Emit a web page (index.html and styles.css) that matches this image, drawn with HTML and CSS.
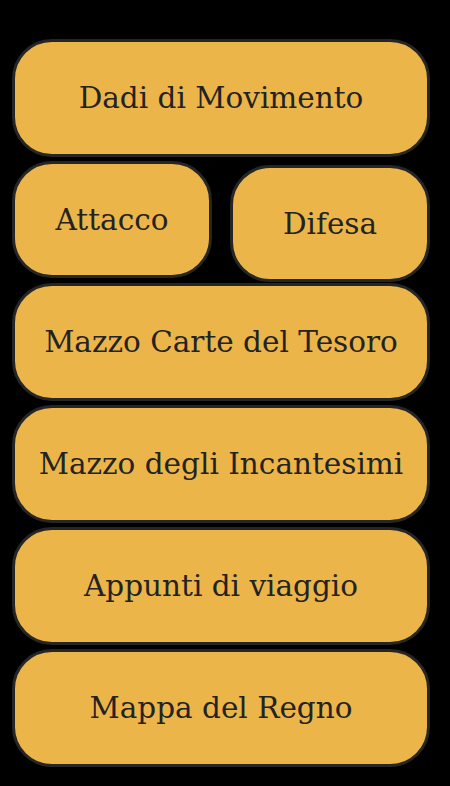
FILE: index.html
```html
<!DOCTYPE html>
<html lang="it">

<head>
  <meta charset="UTF-8" />
  <meta name="viewport" content="width=device-width, initial-scale=1.0" />
  <title>Menu di gioco</title>
  <link rel="stylesheet" href="styles.css">
</head>

<body>
  <div class="menu">
    <button class="menu-btn">Dadi di Movimento</button>

    <div class="row">
      <button class="menu-btn">Attacco</button>
      <button class="menu-btn low">Difesa</button>
    </div>

    <button class="menu-btn">Mazzo Carte del Tesoro</button>
    <button class="menu-btn">Mazzo degli Incantesimi</button>
    <button class="menu-btn">Appunti di viaggio</button>
    <button class="menu-btn">Mappa del Regno</button>
  </div>
</body>

</html>
```

FILE: styles.css
```css
body {
  background-color: #000;
  margin: 0;
  padding: 39px 20px 0 12px;
  font-family: 'DejaVu Serif', 'Liberation Serif', serif;
}

.menu {
  display: flex;
  flex-direction: column;
  gap: 4px;
  width: 418px;
}

.row {
  display: flex;
  align-items: flex-start;
  gap: 18px;
  height: 118px;
}

.menu-btn {
  display: flex;
  align-items: center;
  justify-content: center;
  width: 100%;
  height: 118px;
  flex-shrink: 0;
  padding: 0 4px;
  background-color: #ecb54a;
  border: 3px solid #262626;
  border-radius: 40px;
  color: #232323;
  font-family: inherit;
  font-size: 29.5px;
  cursor: pointer;
}

.row .menu-btn {
  width: 200px;
  height: 117px;
}

.row .menu-btn.low {
  margin-top: 4px;
}
```
